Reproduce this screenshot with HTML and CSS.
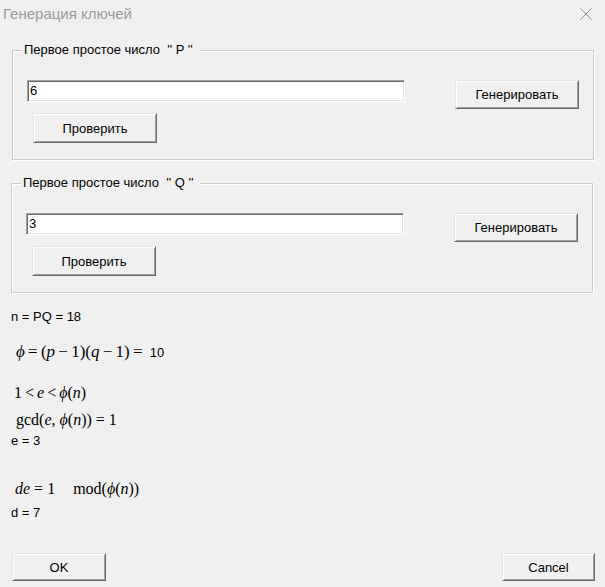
FILE: index.html
```html
<!DOCTYPE html>
<html lang="ru">
<head>
<meta charset="utf-8">
<title>Генерация ключей</title>
<link rel="stylesheet" href="styles.css">
</head>
<body>
<div class="window">
  <div class="titlebar">
    <span class="title">Генерация ключей</span>
    <svg class="close" width="12" height="12" viewBox="0 0 12 12"><path d="M0.5 0.5 L11.5 11.5 M11.5 0.5 L0.5 11.5" stroke="#8c8c8c" stroke-width="1" fill="none"/></svg>
  </div>

  <fieldset class="group group-p">
    <legend>Первое простое число  '' P ''</legend>
    <div class="group-body">
      <div class="group-row">
        <div class="field">6</div>
        <button class="btn btn-gen">Генерировать</button>
      </div>
      <button class="btn btn-check">Проверить</button>
    </div>
  </fieldset>

  <fieldset class="group group-q">
    <legend>Первое простое число  '' Q ''</legend>
    <div class="group-body">
      <div class="group-row">
        <div class="field">3</div>
        <button class="btn btn-gen">Генерировать</button>
      </div>
      <button class="btn btn-check">Проверить</button>
    </div>
  </fieldset>

  <div class="results">
    <div class="line plain line-n">n = PQ = 18</div>
    <div class="line math line-phi"><span class="mi">ϕ</span> = (<span class="mi">p</span> − 1)(<span class="mi">q</span> − 1) = <span class="num">10</span></div>
    <div class="line math line-range">1 &lt; <span class="mi">e</span> &lt; <span class="mi">ϕ</span>(<span class="mi">n</span>)</div>
    <div class="line math line-gcd">gcd(<span class="mi">e</span>, <span class="mi">ϕ</span>(<span class="mi">n</span>)) = 1</div>
    <div class="line plain line-e">e = 3</div>
    <div class="line math line-de"><span class="mi">de</span> = 1 <span class="mod">mod(<span class="mi">ϕ</span>(<span class="mi">n</span>))</span></div>
    <div class="line plain line-d">d = 7</div>
  </div>

  <div class="footer">
    <button class="btn btn-ok">OK</button>
    <button class="btn btn-cancel">Cancel</button>
  </div>
</div>
</body>
</html>
```

FILE: styles.css
```css
html, body {
  margin: 0;
  padding: 0;
  background: #f0f0f0;
}

body {
  font-family: "Liberation Sans", Arial, sans-serif;
  font-size: 13px;
  color: #000;
}

.window {
  width: 605px;
  height: 587px;
  overflow: hidden;
}

.titlebar {
  height: 43px;
  display: flex;
  align-items: flex-start;
  justify-content: space-between;
}

.title {
  margin: 4px 0 0 3px;
  font-size: 15px;
  line-height: 20px;
  color: #9a9a9a;
}

.close {
  margin: 8px 13px 0 0;
}

.group {
  box-sizing: border-box;
  width: 582px;
  margin: 0;
  padding: 0;
  min-width: 0;
  border: 1px solid #cbcbcb;
  box-shadow: 1px 1px 0 #fff, inset 1px 1px 0 #fff;
}

.group-p {
  margin-left: 12px;
}

.group-q {
  margin-left: 11px;
  margin-top: 16px;
}

.group legend {
  margin-left: 9px;
  padding: 0 6px 0 2px;
  font-size: 13px;
  line-height: 14px;
  white-space: pre;
  background: #f0f0f0;
}

.group-body {
  padding: 23px 0 16px 0;
}

.group-row {
  display: flex;
  align-items: flex-start;
  gap: 50px;
  margin-left: 14px;
}

.field {
  box-sizing: border-box;
  width: 378px;
  height: 22px;
  background: #fff;
  border: 1px solid;
  border-color: #a0a0a0 #fff #fff #a0a0a0;
  box-shadow: inset 1px 1px 0 #696969, inset -1px -1px 0 #e3e3e3;
  padding: 0 0 0 2px;
  line-height: 20px;
  font-size: 13px;
}

.btn {
  box-sizing: border-box;
  display: flex;
  align-items: center;
  justify-content: center;
  padding: 0;
  margin: 0;
  font-family: "Liberation Sans", Arial, sans-serif;
  font-size: 13px;
  color: #000;
  background: #f0f0f0;
  border: 1px solid;
  border-color: #e3e3e3 #696969 #696969 #e3e3e3;
  box-shadow: inset 1px 1px 0 #fff, inset -1px -1px 0 #a0a0a0;
  border-radius: 0;
}

.btn-gen {
  width: 124px;
  height: 29px;
}

.btn-check {
  width: 124px;
  height: 30px;
  margin: 4px 0 0 20px;
}

.results {
  display: flex;
  flex-direction: column;
}

.line {
  height: 20px;
  line-height: 20px;
  white-space: pre;
}

.plain {
  margin-left: 11px;
  font-size: 13px;
}

.math {
  font-family: "Liberation Serif", "Times New Roman", serif;
  font-size: 16px;
}

.mi {
  font-style: italic;
}

.num {
  font-family: "Liberation Sans", Arial, sans-serif;
  font-size: 13px;
  margin-left: 4px;
}

.mod {
  margin-left: 14px;
}

.line-n { margin-top: 14px; }
.line-phi { margin-top: 15px; margin-left: 16px; font-size: 17px; word-spacing: -1px; }
.line-range { margin-top: 21px; margin-left: 14px; word-spacing: -1px; }
.line-gcd { margin-top: 7px; margin-left: 16px; }
.line-e { margin-top: 1px; }
.line-de { margin-top: 28px; margin-left: 15px; }
.line-d { margin-top: 4px; }

.footer {
  display: flex;
  justify-content: space-between;
  padding: 30px 10px 0 12px;
}

.btn-ok {
  width: 94px;
  height: 28px;
}

.btn-cancel {
  width: 93px;
  height: 28px;
}
```
